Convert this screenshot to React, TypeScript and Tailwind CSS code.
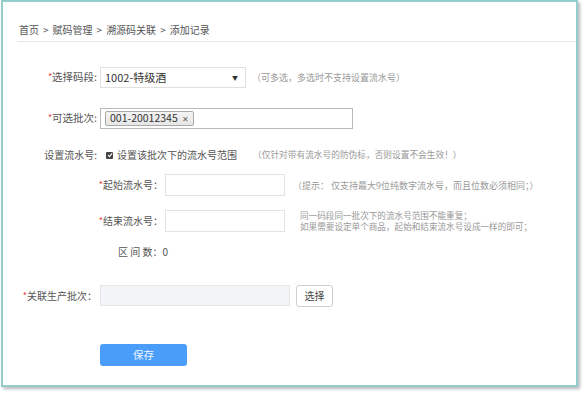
import React from 'react';

const font = { fontFamily: '"Noto Sans CJK SC", "Noto Sans", sans-serif' };

function Star() {
  return <span className="text-[#e4393c] text-[9px] align-top">*</span>;
}

function Sep() {
  return <span className="px-[4px]">&gt;</span>;
}

export default function App() {
  return (
    <div className="w-[584px] h-[393px] bg-white" style={font}>
      <div className="ml-[1px] w-[577px] h-[387px] border-2 border-[#95cccc] bg-white shadow-[2px_2px_3px_rgba(0,0,0,0.28)]">
        <div className="ml-[14px] pl-[2px] pt-[21px] pb-[4px] border-b border-[#e6e6e6] text-[10px] leading-[14px] text-[#555]">
          首页<Sep />赋码管理<Sep />溯源码关联<Sep />添加记录
        </div>

        {/* 选择码段 */}
        <div className="mt-[25px] flex items-center h-[21px]">
          <div className="w-[94px] text-right text-[10.5px] text-[#555] leading-none">
            <Star />选择码段:
          </div>
          <div className="ml-[3px] w-[146px] h-[21px] border border-[#e0e0e0] bg-white flex items-center justify-between pl-[4px] pr-[7px]">
            <span className="text-[11px] text-[#333] leading-none">1002-特级酒</span>
            <span className="text-[6px] text-[#333] leading-none">▼</span>
          </div>
          <span className="ml-[6px] text-[9px] text-[#999] leading-none">（可多选，多选时不支持设置流水号）</span>
        </div>

        {/* 可选批次 */}
        <div className="mt-[20px] flex items-center h-[21px]">
          <div className="w-[94px] text-right text-[10.5px] text-[#555] leading-none">
            <Star />可选批次:
          </div>
          <div className="ml-[3px] w-[253px] h-[21px] border border-[#b9b9b9] bg-white flex items-center pl-[4px]">
            <span className="h-[15px] flex items-center gap-[4px] px-[4px] border border-[#aaa] rounded-[2px] bg-gradient-to-b from-[#f4f4f4] to-[#e6e6e6] text-[10.5px] text-[#333] leading-none">
              001-20012345
              <span className="text-[8px] text-[#666]">✕</span>
            </span>
          </div>
        </div>

        {/* 设置流水号 */}
        <div className="mt-[19px] flex items-center h-[14px]">
          <div className="w-[94px] text-right text-[10px] text-[#555] leading-none">设置流水号:</div>
          <span className="ml-[9px] w-[7px] h-[7px] rounded-[1px] bg-[#444] flex items-center justify-center">
            <svg width="6" height="6" viewBox="0 0 6 6">
              <path d="M1 3.2 L2.5 4.6 L5 1.4" stroke="#fff" strokeWidth="1.1" fill="none" />
            </svg>
          </span>
          <span className="ml-[4px] text-[10px] text-[#555] leading-none">设置该批次下的流水号范围</span>
          <span className="ml-[16px] text-[8.7px] text-[#999] leading-none">（仅针对带有流水号的防伪标，否则设置不会生效！）</span>
        </div>

        {/* 起始流水号 */}
        <div className="mt-[12px] flex items-center h-[22px]">
          <div className="w-[160px] text-right text-[10px] text-[#555] leading-none">
            <Star />起始流水号：
          </div>
          <div className="ml-[2px] w-[120px] h-[22px] border border-[#e2e2e2] bg-white" />
          <span className="ml-[8px] text-[9px] text-[#999] leading-none">（提示： 仅支持最大9位纯数字流水号，而且位数必须相同；）</span>
        </div>

        {/* 结束流水号 */}
        <div className="mt-[14px] flex items-center h-[22px]">
          <div className="w-[160px] text-right text-[10px] text-[#555] leading-none">
            <Star />结束流水号：
          </div>
          <div className="ml-[2px] w-[120px] h-[22px] border border-[#e2e2e2] bg-white" />
          <div className="ml-[15px] text-[8.6px] text-[#999] leading-[11px]">
            <div>同一码段同一批次下的流水号范围不能重复；</div>
            <div>如果需要设定单个商品，起始和结束流水号设成一样的即可；</div>
          </div>
        </div>

        {/* 区间数 */}
        <div className="mt-[13px] h-[14px] flex items-center pl-[115px] text-[10px] text-[#555] leading-none">
          区 间 数：0
        </div>

        {/* 关联生产批次 */}
        <div className="mt-[26px] flex items-center h-[21px]">
          <div className="w-[94px] text-right text-[10px] text-[#555] leading-none whitespace-nowrap">
            <Star />关联生产批次：
          </div>
          <div className="ml-[3px] w-[190px] h-[21px] border border-[#e6e6e6] bg-[#f3f4f7]" />
          <button className="ml-[6px] w-[37px] h-[22px] border border-[#cfcfcf] rounded-[3px] bg-white text-[10px] text-[#444] leading-none">
            选择
          </button>
        </div>

        {/* 保存 */}
        <div className="mt-[34px] pl-[97px]">
          <button className="w-[87px] h-[22px] rounded-[3px] bg-[#4a9efa] text-[10.5px] text-[#eef5ff] leading-none">
            保存
          </button>
        </div>
      </div>
    </div>
  );
}
